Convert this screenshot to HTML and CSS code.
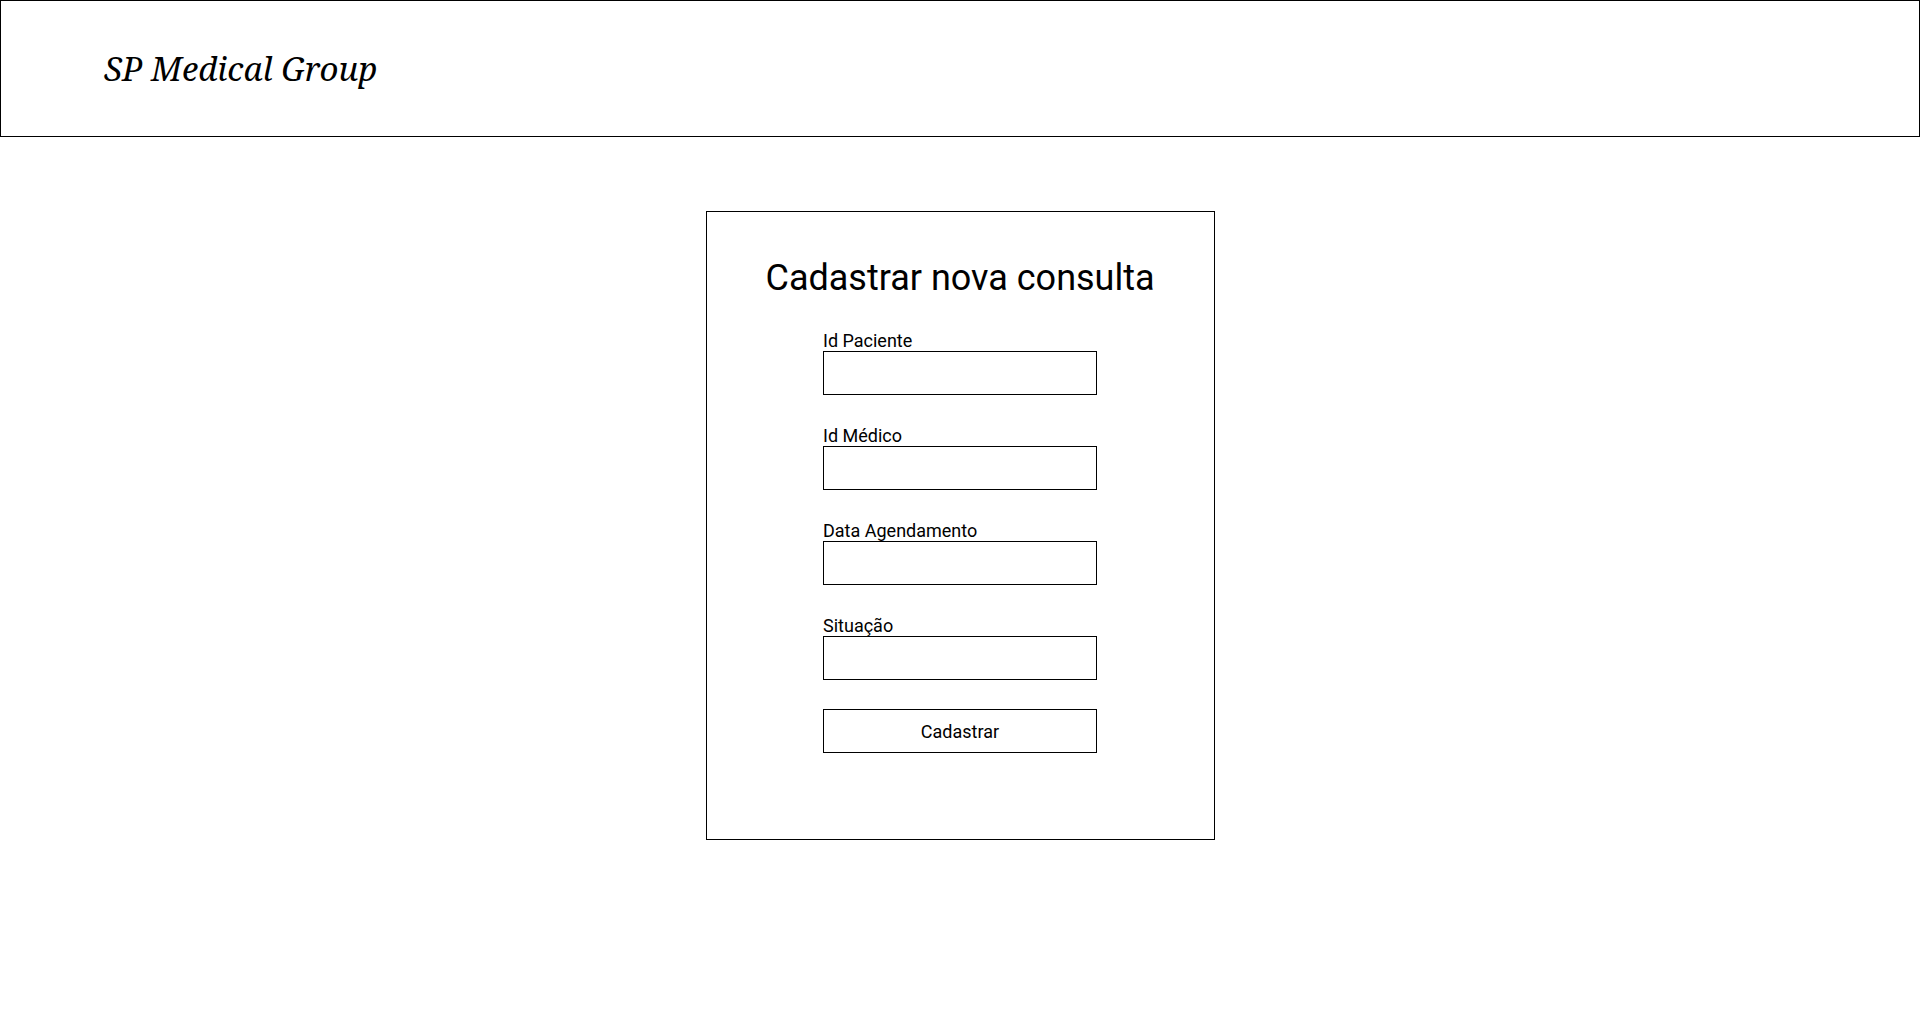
FILE: index.html
```html
<!DOCTYPE html>
<html lang="pt-BR">
<head>
<meta charset="utf-8">
<title>SP Medical Group</title>
<link rel="stylesheet" href="styles.css">
</head>
<body>
<header class="topbar">
  <h1 class="brand">SP Medical Group</h1>
</header>
<main class="main">
  <section class="card">
    <h2 class="card-title">Cadastrar nova consulta</h2>
    <form class="form">
      <div class="field">
        <label class="label">Id Paciente</label>
        <input class="input" type="text">
      </div>
      <div class="field">
        <label class="label">Id Médico</label>
        <input class="input" type="text">
      </div>
      <div class="field">
        <label class="label">Data Agendamento</label>
        <input class="input" type="text">
      </div>
      <div class="field">
        <label class="label">Situação</label>
        <input class="input" type="text">
      </div>
      <button class="button" type="button">Cadastrar</button>
    </form>
  </section>
</main>
</body>
</html>
```

FILE: styles.css
```css
* { box-sizing: border-box; }
html, body { margin: 0; padding: 0; background: #fff; color: #000; }
body { font-family: Roboto, "Noto Sans", sans-serif; }

.topbar {
  height: 137px;
  border: 1px solid #000;
  display: flex;
  align-items: flex-start;
  padding-left: 103px;
}
.brand {
  margin: 0;
  margin-top: 44px;
  font-family: "Noto Serif", "DejaVu Serif", serif;
  font-style: italic;
  font-weight: 400;
  font-size: 33px;
  line-height: 48px;
}

.main {
  display: flex;
  justify-content: center;
  padding-top: 74px;
}
.card {
  width: 509px;
  border: 1px solid #000;
  padding: 45px 0 86px;
  display: flex;
  flex-direction: column;
  align-items: center;
}
.card-title {
  margin: 0;
  font-size: 36px;
  font-weight: 400;
  line-height: 42px;
}
.form {
  margin-top: 32px;
  width: 274px;
  display: flex;
  flex-direction: column;
  gap: 31px;
}
.field { display: flex; flex-direction: column; }
.label {
  font-size: 18px;
  line-height: 20px;
  height: 20px;
}
.input {
  height: 44px;
  border: 1px solid #000;
  margin: 0;
  padding: 0 8px;
  font: inherit;
  background: #fff;
}
.button {
  margin-top: -2px;
  height: 44px;
  border: 1px solid #000;
  background: #fff;
  font-family: Roboto, sans-serif;
  font-size: 18px;
  color: #000;
  padding: 0;
}
```
